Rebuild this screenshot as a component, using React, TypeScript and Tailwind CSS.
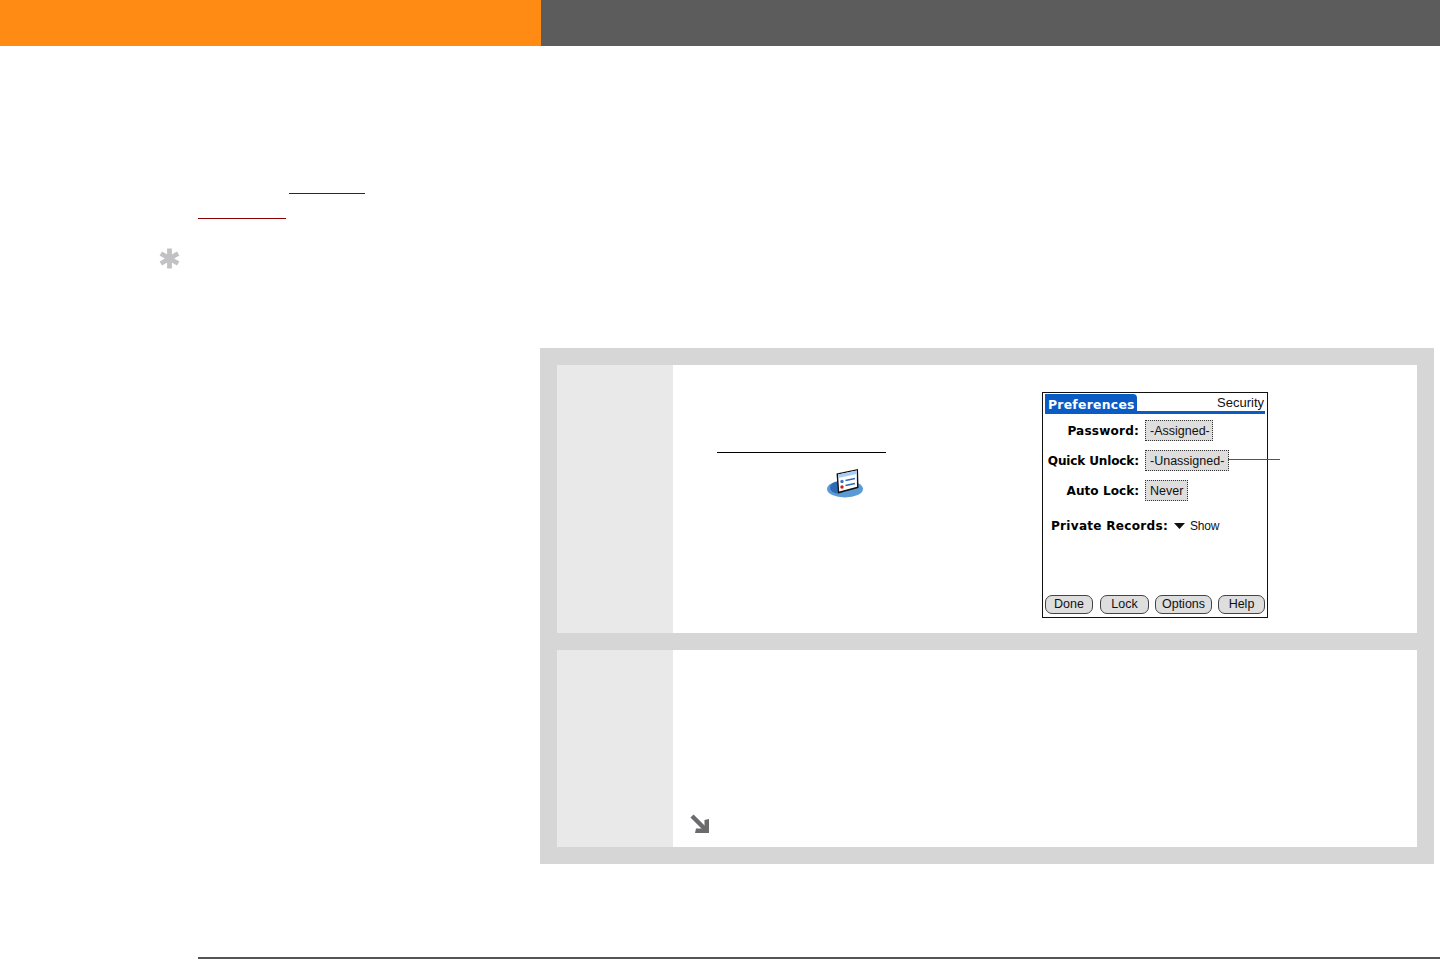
import React from 'react';

const sans = 'font-["Liberation_Sans",Arial,sans-serif]';

// One labelled row on the handheld's security screen
function SecurityRow({ label, value, fieldWidth, tracking, callout }: { label: string; value: string; fieldWidth: string; tracking: string; callout?: boolean }) {
  return (
    <div className="flex h-[21px] items-center">
      <div className="flex w-[94px] justify-end pt-px">
        <span className={`${tracking} origin-right scale-x-[0.93] whitespace-nowrap font-["DejaVu_Sans",sans-serif] text-[13px] font-bold text-black`}>
          {label}
        </span>
      </div>
      <span className={`${fieldWidth} relative ml-[6px] flex h-[21px] items-center whitespace-nowrap border border-dotted border-[#333] bg-[#dedede] pl-1 pt-px text-[12.5px] leading-none text-[#111]`}>
        {value}
        {callout && <span className="absolute left-full top-[8px] h-px w-[52px] bg-[#555]" />}
      </span>
    </div>
  );
}

function PalmButton({ label, width, gap }: { label: string; width: string; gap: string }) {
  return (
    <span className={`${width} ${gap} flex h-[19px] items-center justify-center rounded-[7px] border-[1.5px] border-[#444] bg-[#dedede] text-[12.5px] leading-none text-[#111]`}>
      {label}
    </span>
  );
}

function PrefsIcon() {
  return (
    <svg width="36" height="30" viewBox="0 0 36 30" className="block">
      <ellipse cx="18" cy="20" rx="18" ry="8.5" fill="#5b9bd5" />
      <ellipse cx="11" cy="18.5" rx="8" ry="6" fill="#2f6ab5" />
      <path d="M9.5 4.5 L31 0 L31.5 19 L11 24.5 Z" fill="#111" />
      <path d="M11 5.5 L29.8 1.6 L30 17.8 L12.2 22.6 Z" fill="#fff" />
      <path d="M11 5.5 L29.8 1.6 L29.9 5 L11.3 9 Z" fill="#a9cdf2" />
      <circle cx="15" cy="12.5" r="1.7" fill="#3f74c4" />
      <circle cx="15" cy="18" r="1.7" fill="#d01818" />
      <path d="M18.5 11.5 L28 9.5 M18.5 16.5 L28 14.5" stroke="#2f6ab5" strokeWidth="1.4" />
    </svg>
  );
}

export default function App() {
  return (
    <div className={`flex h-[959px] w-[1440px] flex-col overflow-hidden bg-white ${sans}`}>
      <header className="flex h-[46px] shrink-0">
        <div className="w-[541px] bg-[#ff8a14]" />
        <div className="flex-1 bg-[#5c5c5c]" />
      </header>

      <main className="flex flex-1">
        {/* Sidebar: only the link underlines and the tip mark are visible */}
        <aside className="w-[540px] shrink-0">
          <div className="ml-[289px] mt-[147px] h-px w-[76px] bg-[#8b0000]" />
          <div className="ml-[198px] mt-[24px] h-px w-[88px] bg-[#8b0000]" />
          <svg width="21" height="21" viewBox="0 0 21 21" className="ml-[159px] mt-[29px] block">
            <path d="M10.5 0.5 V20.5 M1.8 5.5 L19.2 15.5 M19.2 5.5 L1.8 15.5" stroke="#c2c2c4" strokeWidth="4.8" />
          </svg>
        </aside>

        <section className="mr-[6px] mt-[302px] flex h-[516px] flex-1 flex-col gap-[17px] bg-[#d6d6d6] p-[17px]">
          <div className="flex h-[268px]">
            <div className="w-[116px] shrink-0 bg-[#e9e9e9]" />
            <div className="flex flex-1 bg-white">
              <div className="w-[369px] shrink-0 pl-[44px] pt-[87px]">
                <div className="h-px w-[169px] bg-black" />
                <div className="ml-[110px] mt-[16px]">
                  <PrefsIcon />
                </div>
              </div>

              {/* Handheld screen */}
              <div className="mt-[27px] flex h-[226px] w-[226px] shrink-0 flex-col border border-[#111] bg-white px-[2px] pt-px">
                <div className="flex h-[20px] shrink-0 border-b-[3px] border-[#0a5cc4]">
                  <span className="flex h-[19px] w-[92px] shrink-0 items-center rounded-tr-[4px] bg-[#0a5cc4] pl-[3px] pt-[2px]">
                    <span className='origin-left scale-x-[0.95] whitespace-nowrap font-["DejaVu_Sans",sans-serif] text-[13px] font-bold tracking-[0.3px] text-white'>
                      Preferences
                    </span>
                  </span>
                  <span className="ml-auto pr-px pt-px text-[13px] leading-[15px] text-[#111]">Security</span>
                </div>
                <div className="mt-[6px] flex flex-col gap-[9px]">
                  <SecurityRow label="Password:" value="-Assigned-" fieldWidth="w-[68px]" tracking="tracking-[0.2px]" />
                  <SecurityRow label="Quick Unlock:" value="-Unassigned-" fieldWidth="w-[84px]" tracking="tracking-[-0.2px]" callout />
                  <SecurityRow label="Auto Lock:" value="Never" fieldWidth="w-[43px]" tracking="tracking-[0.05px]" />
                </div>
                <div className="ml-[6px] mt-[14px] flex h-[20px] items-center pt-px">
                  <span className='w-[123px] origin-left scale-x-[0.93] whitespace-nowrap font-["DejaVu_Sans",sans-serif] text-[13px] font-bold tracking-[0.28px] text-black'>
                    Private Records:
                  </span>
                  <svg width="11" height="6" viewBox="0 0 11 6" className="shrink-0">
                    <path d="M0 0 H11 L5.5 6 Z" fill="#111" />
                  </svg>
                  <span className="ml-[5px] text-[12px] leading-none tracking-[-0.2px] text-[#111]">Show</span>
                </div>
                <div className="mb-[3px] mt-auto flex">
                  <PalmButton label="Done" width="w-[48px]" gap="ml-0" />
                  <PalmButton label="Lock" width="w-[49px]" gap="ml-[7px]" />
                  <PalmButton label="Options" width="w-[57px]" gap="ml-[6px]" />
                  <PalmButton label="Help" width="w-[47px]" gap="ml-[6px]" />
                </div>
              </div>
            </div>
          </div>

          <div className="flex h-[197px]">
            <div className="w-[116px] shrink-0 bg-[#e9e9e9]" />
            <div className="flex flex-1 items-end bg-white pb-[13px] pl-[17px]">
              <svg width="20" height="20" viewBox="0 0 20 20" className="block">
                <path d="M2 2 L15 15" stroke="#6b6b6d" strokeWidth="4.4" />
                <path d="M19 5 V19 H5 L6 14.5 H14.5 V6 Z" fill="#6b6b6d" />
              </svg>
            </div>
          </div>
        </section>
      </main>

      <footer className="ml-[198px] h-[2px] shrink-0 bg-[#555]" />
    </div>
  );
}
